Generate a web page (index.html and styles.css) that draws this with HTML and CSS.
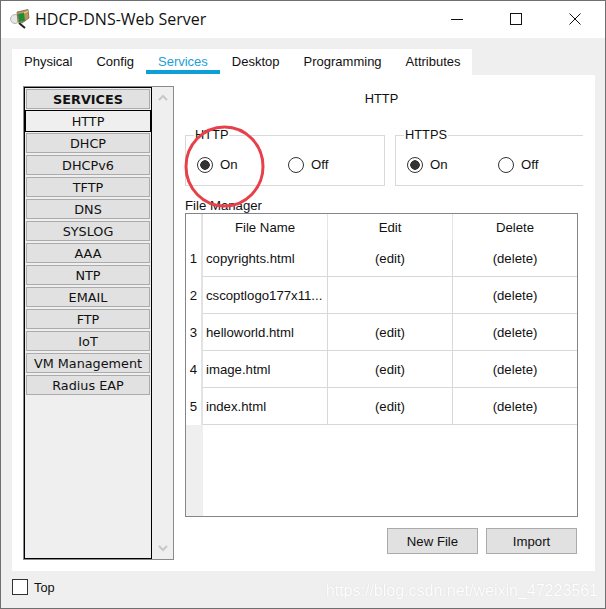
FILE: index.html
```html
<!DOCTYPE html>
<html lang="en">
<head>
  <meta charset="UTF-8" />
  <title>HDCP-DNS-Web Server</title>
  <link rel="stylesheet" href="styles.css">
</head>
<body>
<div class="window">
  <div class="titlebar">
    <svg class="app-icon" width="20" height="20" viewBox="0 0 20 20">
      <circle cx="5" cy="10" r="4.5" fill="#e6e6e6" stroke="#b5b5b5"/>
      <path d="M9 14 L15 19" stroke="#222" stroke-width="2"/>
      <path d="M7 3 L18 0.5 L19 9 L12 14 L8 13 Z" fill="#b9975b" stroke="#6b5a36" stroke-width="0.7"/>
      <path d="M8 5 L14 4 L15 12 L9 13 Z" fill="#1f8a3a"/>
      <path d="M14 4 L18 2" stroke="#efe0b5"/>
    </svg>
    <span class="title">HDCP-DNS-Web Server</span>
    <div class="win-buttons">
      <svg width="14" height="14" viewBox="0 0 14 14"><path d="M1 7.5H13" stroke="#111"/></svg>
      <svg width="14" height="14" viewBox="0 0 14 14"><rect x="1.5" y="1.5" width="11" height="11" fill="none" stroke="#111"/></svg>
      <svg width="14" height="14" viewBox="0 0 14 14"><path d="M1.5 1.5L12.5 12.5M12.5 1.5L1.5 12.5" stroke="#111"/></svg>
    </div>
  </div>

  <div class="client">
    <div class="tabs">
      <span class="tab">Physical</span>
      <span class="tab">Config</span>
      <span class="tab active">Services</span>
      <span class="tab">Desktop</span>
      <span class="tab">Programming</span>
      <span class="tab">Attributes</span>
    </div>

    <div class="panel">
      <div class="sidebar">
        <div class="service-list">
          <div class="service heading">SERVICES</div>
          <div class="service selected">HTTP</div>
          <div class="service">DHCP</div>
          <div class="service">DHCPv6</div>
          <div class="service">TFTP</div>
          <div class="service">DNS</div>
          <div class="service">SYSLOG</div>
          <div class="service">AAA</div>
          <div class="service">NTP</div>
          <div class="service">EMAIL</div>
          <div class="service">FTP</div>
          <div class="service">IoT</div>
          <div class="service">VM Management</div>
          <div class="service">Radius EAP</div>
        </div>
        <div class="scroll">
          <svg width="10" height="8" viewBox="0 0 10 8"><path d="M1 6L5 2L9 6" fill="none" stroke="#c8c8c8" stroke-width="2"/></svg>
          <svg width="10" height="8" viewBox="0 0 10 8"><path d="M1 2L5 6L9 2" fill="none" stroke="#c8c8c8" stroke-width="2"/></svg>
        </div>
      </div>

      <div class="content">
        <div class="content-title">HTTP</div>
        <div class="groups">
          <fieldset class="group group-http">
            <legend>HTTP</legend>
            <label class="radio"><span class="dot checked"></span>On</label>
            <label class="radio"><span class="dot"></span>Off</label>
          </fieldset>
          <fieldset class="group group-https">
            <legend>HTTPS</legend>
            <label class="radio"><span class="dot checked"></span>On</label>
            <label class="radio"><span class="dot"></span>Off</label>
          </fieldset>
        </div>

        <div class="fm-label">File Manager</div>
        <div class="file-table">
          <table>
            <thead>
              <tr><th class="num"></th><th class="name">File Name</th><th class="edit">Edit</th><th class="del">Delete</th></tr>
            </thead>
            <tbody>
              <tr><td class="num">1</td><td class="name">copyrights.html</td><td>(edit)</td><td>(delete)</td></tr>
              <tr><td class="num">2</td><td class="name">cscoptlogo177x11...</td><td></td><td>(delete)</td></tr>
              <tr><td class="num">3</td><td class="name">helloworld.html</td><td>(edit)</td><td>(delete)</td></tr>
              <tr><td class="num">4</td><td class="name">image.html</td><td>(edit)</td><td>(delete)</td></tr>
              <tr><td class="num">5</td><td class="name">index.html</td><td>(edit)</td><td>(delete)</td></tr>
            </tbody>
          </table>
          <div class="table-rest"><div class="rest-gutter"></div></div>
        </div>

        <div class="actions">
          <button class="btn">New File</button>
          <button class="btn">Import</button>
        </div>
      </div>
    </div>

    <div class="footer">
      <label class="top-check"><span class="box"></span>Top</label>
      <span class="watermark">https://blog.csdn.net/weixin_47223561</span>
    </div>
  </div>

  <!-- red marker drawn over the screenshot -->
  <svg class="marker" width="84" height="86" viewBox="0 0 84 86">
    <ellipse cx="41.5" cy="42.5" rx="38.5" ry="39.5" fill="none" stroke="#e8404a" stroke-width="3"/>
  </svg>
</div>
</body>
</html>
```

FILE: styles.css
```css
* {
  box-sizing: border-box;
}
html, body {
  margin: 0;
  padding: 0;
}
body {
  font-family: "Liberation Sans", Arial, sans-serif;
  font-size: 13.2px;
  color: #111;
  background: #fff;
}
.window {
  position: relative;
  width: 606px;
  height: 609px;
  border: 1px solid #6f6f6f;
  display: flex;
  flex-direction: column;
  overflow: hidden;
}

/* title bar */
.titlebar {
  height: 37px;
  flex: none;
  background: #fff;
  display: flex;
  align-items: center;
  padding: 0 0 2px 9px;
}
.app-icon {
  margin-right: 5px;
}
.title {
  font-family: "Open Sans", sans-serif;
  font-size: 16px;
  color: #111;
}
.win-buttons {
  margin-left: auto;
  display: flex;
  gap: 45px;
  padding-right: 23px;
}

/* client area */
.client {
  flex: 1;
  background: #efefef;
  padding: 11px 10px 0 11px;
  display: flex;
  flex-direction: column;
}
.tabs {
  width: 460px;
  height: 26px;
  flex: none;
  background: #fff;
  display: flex;
  font-size: 13px;
  line-height: 14px;
}
.tab {
  height: 25px;
  padding: 6px 12px 0;
}
.tab.active {
  color: #1ba1d6;
  border-bottom: 4px solid #0f9fd6;
}

.panel {
  height: 496px;
  flex: none;
  background: #fff;
  display: flex;
  padding: 11px 16px 0 11px;
}

/* left service list */
.sidebar {
  width: 151px;
  height: 474px;
  flex: none;
  border: 1px solid #8a8a90;
  background: #efefef;
  display: flex;
}
.service-list {
  width: 128px;
  height: 472px;
  flex: none;
  border: 1px solid #000;
  padding: 1px 1px 0 1px;
  font-family: "DejaVu Sans", Verdana, sans-serif;
  font-size: 12.8px;
}
.service {
  height: 20px;
  margin: 0 0 2px 0;
  background: #e1e1e1;
  border: 1px solid #ababab;
  text-align: center;
  line-height: 19px;
  white-space: nowrap;
}
.service.heading {
  font-weight: bold;
}
.service.selected {
  height: 22px;
  margin: -1px -1px 1px -1px;
  background: #efefef;
  border: 1px solid #000;
  line-height: 21px;
}
.scroll {
  flex: 1;
  display: flex;
  flex-direction: column;
  justify-content: space-between;
  align-items: center;
  padding: 7px 0 7px;
}

/* right side */
.content {
  margin-left: 11px;
  width: 398px;
  flex: none;
  display: flex;
  flex-direction: column;
}
.content-title {
  height: 14px;
  margin-top: 6px;
  padding-left: 1px;
  text-align: center;
  line-height: 14px;
  width: 392px;
  font-size: 12.8px;
}
.groups {
  display: flex;
  gap: 10px;
  margin-top: 22px;
  height: 58px;
}
.group {
  margin: 0;
  padding: 2px 0 0 11px;
  border: 1px solid #d9d9d9;
  height: 58px;
  min-width: 0;
  flex: none;
  display: flex;
  align-items: center;
}
.group legend {
  padding: 0 1px;
  margin-left: -3px;
  line-height: 14px;
  font-size: 12.8px;
}
.group-http {
  width: 200px;
}
.group-https {
  width: 188px;
  border-right: none;
}
.radio {
  display: flex;
  align-items: center;
  width: 91px;
  flex: none;
  line-height: 17px;
}
.dot {
  width: 16px;
  height: 16px;
  border: 1px solid #333;
  border-radius: 50%;
  background: #fff;
  margin-right: 7px;
  flex: none;
}
.dot.checked {
  background: radial-gradient(circle, #333 0 4.5px, #fff 5px);
}
.fm-label {
  height: 14px;
  line-height: 14px;
  margin-top: 13px;
}
.file-table {
  width: 393px;
  height: 304px;
  border: 1px solid #85858c;
  display: flex;
  flex-direction: column;
}
.file-table table {
  border-collapse: separate;
  border-spacing: 0;
  table-layout: fixed;
  width: 391px;
  flex: none;
}
.file-table th {
  font-weight: normal;
  height: 26px;
  padding: 0;
  border-right: 1px solid #e6e6e6;
}
.file-table td {
  height: 37px;
  padding: 0;
  text-align: center;
  border-right: 1px solid #d8d8d8;
  border-bottom: 1px solid #d8d8d8;
}
.file-table th:last-child, .file-table td:last-child {
  border-right: none;
}
.file-table .num {
  width: 17px;
  border-right: 2px solid #e2e2e2;
}
.file-table td.num {
  border-bottom: none;
}
.file-table .name {
  width: 125px;
  text-align: left;
  padding-left: 3px;
  white-space: nowrap;
  overflow: hidden;
}
.file-table th.name {
  text-align: center;
  padding: 0;
}
.file-table .edit {
  width: 125px;
}
.table-rest {
  flex: 1;
}
.rest-gutter {
  width: 17px;
  height: 100%;
  background: #efefef;
}
.actions {
  display: flex;
  justify-content: flex-end;
  gap: 8px;
  margin-top: 11px;
  width: 392px;
}
.btn {
  width: 91px;
  height: 26px;
  padding: 1px 0 0;
  background: #e1e1e1;
  border: 1px solid #ababab;
  font-family: "Liberation Sans", Arial, sans-serif;
  font-size: 13.2px;
  color: #111;
}

/* bottom strip */
.footer {
  flex: 1;
  display: flex;
  align-items: center;
  padding-bottom: 5px;
}
.top-check {
  display: flex;
  align-items: center;
  font-size: 12.8px;
}
.box {
  width: 16px;
  height: 16px;
  border: 1px solid #333;
  background: #fff;
  margin-right: 6px;
}
.watermark {
  margin: 8px -3px 0 auto;
  font-size: 16px;
  color: #fff;
  text-shadow: 0 0 1px #cfcfcf;
  white-space: nowrap;
}
.marker {
  position: absolute;
  left: 182px;
  top: 123px;
  pointer-events: none;
}
```
